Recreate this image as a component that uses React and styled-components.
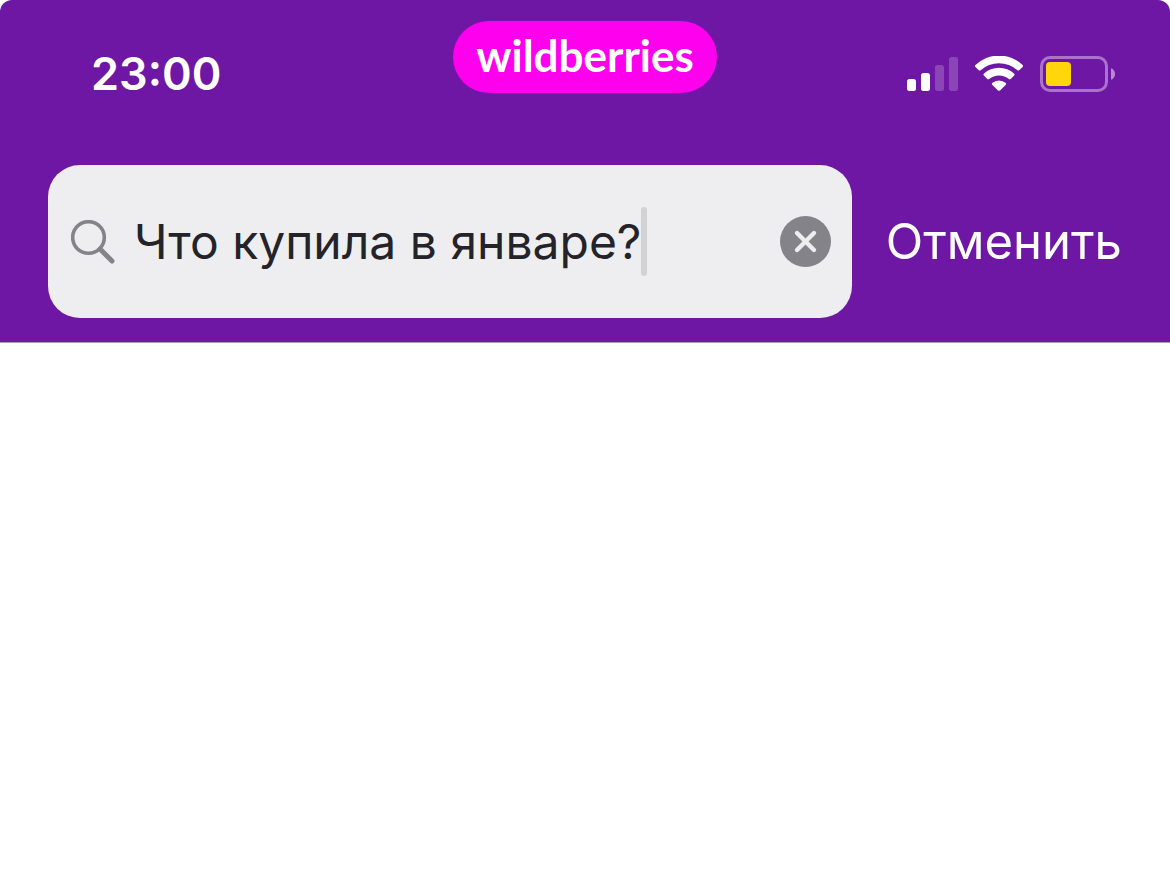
import React, { useState } from "react";
import styled, { createGlobalStyle } from "styled-components";

const GlobalStyle = createGlobalStyle`
  *, *::before, *::after { box-sizing: border-box; }
  body {
    margin: 0;
    background: #ffffff;
    font-family: Inter, "Liberation Sans", sans-serif;
  }
`;

const Header = styled.header`
  background: #6e17a5;
  border-bottom: 1px solid #a9a0b0;
  border-radius: 12px 12px 0 0;
  padding-bottom: 24px;
`;

const StatusBar = styled.div`
  display: grid;
  grid-template-columns: 1fr auto 1fr;
  align-items: start;
  padding: 21px 55px 61px 91px;
`;

const Time = styled.time`
  padding-top: 23px;
  color: #ffffff;
  font-size: 45px;
  font-weight: 600;
  line-height: 60px;
`;

const BrandLink = styled.a`
  display: flex;
  justify-content: center;
  width: 264px;
  height: 72px;
  margin-left: -36px;
  border-radius: 36px;
  background: #ff00ee;
  color: #ffffff;
  font-family: Lato, "Open Sans", sans-serif;
  font-size: 44px;
  font-weight: 700;
  line-height: 68px;
  text-decoration: none;
`;

const Indicators = styled.div`
  display: flex;
  justify-content: flex-end;
  align-items: center;
  gap: 16px;
  padding-top: 35px;
  svg { display: block; }
`;

const SearchRow = styled.form`
  display: flex;
  align-items: center;
  gap: 34px;
  padding: 0 48px;
`;

const Field = styled.div`
  flex: 1;
  min-width: 0;
  display: flex;
  align-items: center;
  height: 153px;
  padding: 0 21px 0 23px;
  border-radius: 32px;
  background: #eeeef0;
`;

const SearchLabel = styled.label`
  display: flex;
  flex: none;
  margin-right: 19px;
`;

const SearchInput = styled.input`
  field-sizing: content;
  min-width: 0;
  padding: 0;
  border: 0;
  outline: 0;
  background: transparent;
  color: #242329;
  font-family: inherit;
  font-size: 48px;
  line-height: 72px;
`;

const Caret = styled.span`
  flex: none;
  width: 6px;
  height: 69px;
  border-radius: 3px;
  background: #d2d2d4;
`;

const ClearButton = styled.button`
  flex: none;
  display: flex;
  margin-left: auto;
  padding: 0;
  border: 0;
  background: none;
  cursor: pointer;
`;

const CancelButton = styled.button`
  flex: none;
  padding: 0;
  border: 0;
  background: none;
  color: #ffffff;
  font-family: inherit;
  font-size: 49px;
  line-height: 72px;
  cursor: pointer;
`;

const SignalIcon = () => (
  <svg width="52" height="36" viewBox="0 0 52 36" fill="#fff" role="img" aria-label="Сигнал">
    <rect x="0" y="23" width="9" height="12" rx="2.5" />
    <rect x="14" y="17" width="9" height="18" rx="2.5" />
    <rect x="28" y="9" width="9" height="26" rx="2.5" opacity="0.2" />
    <rect x="42" y="1" width="9" height="34" rx="2.5" opacity="0.2" />
  </svg>
);

const WifiIcon = () => (
  <svg width="49" height="36" viewBox="0 1 49 36" fill="#fff" role="img" aria-label="Wi-Fi">
    <path d="M.4 10.1A34 34 0 0 1 47.6 10.1Q48.5 11 47.6 11.9L44.2 15.2Q43.3 16 42.4 15.2A27.5 27.5 0 0 0 5.6 15.2Q4.7 16 3.8 15.2L.4 11.9Q-.5 11 .4 10.1Z" />
    <path d="M8.8 18.7A22.5 22.5 0 0 1 39.2 18.7Q40.1 19.6 39.2 20.5L35.7 23.9Q34.8 24.8 33.9 24A15.5 15.5 0 0 0 14.1 24Q13.2 24.8 12.3 23.9L8.8 20.5Q7.9 19.6 8.8 18.7Z" />
    <path d="M17.2 28A10.5 10.5 0 0 1 30.8 28Q31.7 28.9 30.8 29.8L25 35.4Q24 36.3 23 35.4L17.2 29.8Q16.3 28.9 17.2 28Z" />
  </svg>
);

const BatteryIcon = () => (
  <svg width="75" height="36" viewBox="0 0 75 36" fill="none" role="img" aria-label="Батарея">
    <rect x="1.5" y="1.5" width="65" height="33" rx="8.5" stroke="#fff" strokeWidth="3" opacity="0.4" />
    <rect x="6" y="6" width="25" height="24" rx="4" fill="#ffd60a" />
    <path d="M71 12.2C73.5 13 75 15.3 75 18C75 20.7 73.5 23 71 23.8Z" fill="#fff" opacity="0.5" />
  </svg>
);

const MagnifierIcon = () => (
  <svg width="44" height="44" viewBox="0 0 44 44" fill="none" stroke="#84838a" role="img" aria-label="Поиск">
    <circle cx="17.5" cy="17.5" r="15.8" strokeWidth="3.6" />
    <path d="M29 29L41 41" strokeWidth="5" strokeLinecap="round" />
  </svg>
);

const ClearIcon = () => (
  <svg width="51" height="51" viewBox="0 0 51 51" aria-hidden="true">
    <circle cx="25.5" cy="25.5" r="25.5" fill="#84838a" />
    <path d="M17 17L34 34M34 17L17 34" stroke="#eeeef0" strokeWidth="4.4" strokeLinecap="round" />
  </svg>
);

export default function App() {
  const [query, setQuery] = useState("Что купила в январе?");
  return (
    <>
      <GlobalStyle />
      <Header>
        <StatusBar>
          <Time>23:00</Time>
          <BrandLink href="#">wildberries</BrandLink>
          <Indicators>
            <SignalIcon />
            <WifiIcon />
            <BatteryIcon />
          </Indicators>
        </StatusBar>
        <SearchRow role="search" onSubmit={(e) => e.preventDefault()}>
          <Field>
            <SearchLabel htmlFor="query">
              <MagnifierIcon />
            </SearchLabel>
            <SearchInput
              id="query"
              type="text"
              autoComplete="off"
              value={query}
              onChange={(e) => setQuery(e.target.value)}
            />
            <Caret aria-hidden="true" />
            <ClearButton type="button" aria-label="Очистить" onClick={() => setQuery("")}>
              <ClearIcon />
            </ClearButton>
          </Field>
          <CancelButton type="button">Отменить</CancelButton>
        </SearchRow>
      </Header>
    </>
  );
}
